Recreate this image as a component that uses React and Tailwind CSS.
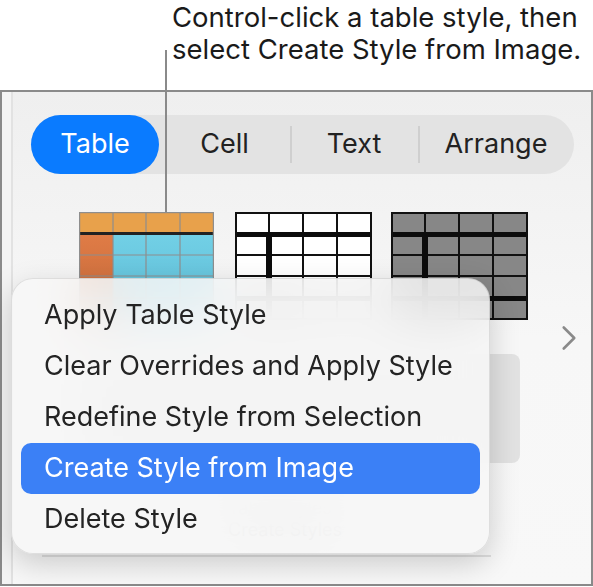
import { ChevronRight } from 'lucide-react'

const tabs = [
  { label: 'Table', w: 'w-[128px]' },
  { label: 'Cell', w: 'w-[131px]' },
  { label: 'Text', w: 'w-[128px]' },
  { label: 'Arrange', w: 'w-[156px]' },
]

const menuItems = [
  'Apply Table Style',
  'Clear Overrides and Apply Style',
  'Redefine Style from Selection',
  'Create Style from Image',
  'Delete Style',
]

const cols = [0, 34, 67, 101, 135]
const rows = [0, 21, 43, 64, 86, 108]

function OrangeTable() {
  return (
    <svg width="135" height="108" viewBox="0 0 135 108" className="shrink-0">
      <defs>
        <linearGradient id="cy" x1="0" y1="0" x2="0" y2="1">
          <stop offset="0" stopColor="#72d0e6" />
          <stop offset="1" stopColor="#5dbcd6" />
        </linearGradient>
        <linearGradient id="or" x1="0" y1="0" x2="0" y2="1">
          <stop offset="0" stopColor="#e07c46" />
          <stop offset="1" stopColor="#c4683a" />
        </linearGradient>
      </defs>
      <rect x="0" y="0" width="135" height="21" fill="#e8a14b" />
      <rect x="0" y="21" width="34" height="87" fill="url(#or)" />
      <rect x="34" y="21" width="101" height="87" fill="url(#cy)" />
      {cols.slice(1, 4).map(x => (
        <line key={x} x1={x} y1="0" x2={x} y2="108" stroke="#8e8e8e" strokeWidth="1.2" />
      ))}
      {rows.slice(2, 5).map(y => (
        <line key={y} x1="0" y1={y} x2="135" y2={y} stroke="#8e8e8e" strokeWidth="1.2" />
      ))}
      <rect x="0" y="20" width="135" height="3" fill="#222" />
      <rect x="0.6" y="0.6" width="133.8" height="106.8" fill="none" stroke="#8e8e8e" strokeWidth="1.2" />
    </svg>
  )
}

function LinedTable({ fill }) {
  return (
    <svg width="137" height="108" viewBox="0 0 137 108" className="shrink-0">
      <rect x="0" y="0" width="137" height="108" fill={fill} />
      {[68, 102].map(x => (
        <line key={x} x1={x} y1="0" x2={x} y2="108" stroke="#111" strokeWidth="2" />
      ))}
      <line x1="34" y1="0" x2="34" y2="21" stroke="#111" strokeWidth="2" />
      {[43, 64].map(y => (
        <line key={y} x1="0" y1={y} x2="137" y2={y} stroke="#111" strokeWidth="2" />
      ))}
      <rect x="0" y="20" width="137" height="5" fill="#0c0c0c" />
      <rect x="31" y="20" width="6" height="88" fill="#0c0c0c" />
      <rect x="0" y="84" width="137" height="5" fill="#0c0c0c" />
      <rect x="1" y="1" width="135" height="106" fill="none" stroke="#111" strokeWidth="2" />
    </svg>
  )
}

export default function App() {
  return (
    <div className="relative w-[593px] h-[587px] bg-white overflow-hidden text-[#222]" style={{ fontFamily: 'Inter, "Noto Sans", sans-serif' }}>
      <div className="h-[90px] pl-[172px] pt-[1px] text-[27.5px] leading-[32px] text-[#1a1a1a] whitespace-nowrap">
        Control-click a table style, then<br />
        select Create Style from Image.
      </div>

      <div className="h-[496px] flex border-2 border-[#8a8a8a] bg-[#f3f3f3]">
        <div className="w-[11px] shrink-0 bg-[#f4f4f4] border-r-2 border-[#e2e2e2]" />
        <div className="flex-1 flex flex-col bg-gradient-to-b from-[#efefef] via-[#f7f7f7] to-[#f8f8f8]">
          <div className="mt-[23px] ml-[18px] w-[543px] h-[59px] flex items-center rounded-full bg-[#e3e3e3]">
            {tabs.map((t, i) => (
              <div key={t.label} className={`relative ${t.w} h-full flex items-center justify-center text-[27px]`}>
                {i === 0 ? (
                  <div className="w-full h-full rounded-full bg-[#0a7bff] text-white flex items-center justify-center">{t.label}</div>
                ) : (
                  <>
                    {i > 1 && <div className="absolute left-0 top-[11px] bottom-[11px] w-[2px] bg-[#cfcfcf]" />}
                    <span className="text-[#222]">{t.label}</span>
                  </>
                )}
              </div>
            ))}
          </div>

          <div className="mt-[38px] ml-[66px] flex items-start">
            <OrangeTable />
            <div className="ml-[21px]"><LinedTable fill="#ffffff" /></div>
            <div className="ml-[19px]"><LinedTable fill="#878787" /></div>
            <ChevronRight size={42} strokeWidth={1.5} className="ml-[20px] mt-[105px] text-[#8a8a8a]" />
          </div>

          <div className="-mt-[5px] ml-[66px] w-[441px] h-[109px] rounded-lg bg-[#e2e2e2]" />

          <div className="mt-[34px] ml-[215px] text-[18px] leading-[22px] text-[#8a8a8a]">
            Table Styles<br />
            Create Styles
          </div>

          <div className="mt-[14px] ml-[29px] w-[449px] h-[2px] bg-[#dedede]" />
        </div>
      </div>

      <div className="absolute left-[11px] top-[278px] w-[479px] h-[276px] rounded-[22px] bg-[#f7f7f7]/85 backdrop-blur-xl border border-black/10 shadow-[0_10px_30px_rgba(0,0,0,0.18)] px-[9px] py-[11px]">
        {menuItems.map(item => (
          <div
            key={item}
            className={`h-[51px] flex items-center pl-[23px] rounded-[10px] text-[27px] whitespace-nowrap ${item === 'Create Style from Image' ? 'bg-[#3b80f6] text-white' : 'text-[#242424]'}`}>
            {item}
          </div>
        ))}
      </div>

      <div className="absolute left-[165px] top-[50px] w-[2px] h-[162px] bg-[#8a8a8a]" />
    </div>
  )
}
